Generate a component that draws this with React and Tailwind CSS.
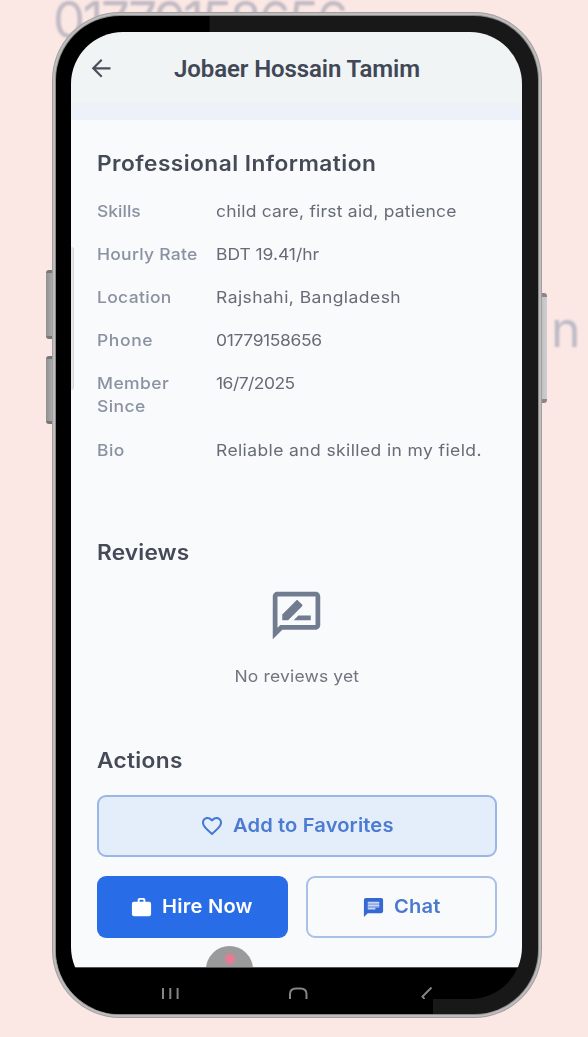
import React from "react";

const rows = [
  { label: "Skills", value: "child care, first aid, patience", h: "h-[42.75px]", lt: "tracking-[0px]", vt: "tracking-[0.2px]" },
  { label: "Hourly Rate", value: "BDT 19.41/hr", h: "h-[42.75px]", lt: "tracking-[0.25px]", vt: "tracking-[-0.05px]" },
  { label: "Location", value: "Rajshahi, Bangladesh", h: "h-[43px]", lt: "tracking-[0.3px]", vt: "tracking-[0.43px]" },
  { label: "Phone", value: "01779158656", h: "h-[43px]", lt: "tracking-[0.6px]", vt: "tracking-[-0.35px]" },
  { label: "Member Since", value: "16/7/2025", h: "h-[67px]", lt: "tracking-[0.4px]", vt: "tracking-[-0.5px]" },
  { label: "Bio", value: "Reliable and skilled in my field.", h: "h-[42.75px]", lt: "tracking-[0.4px]", vt: "tracking-[0.37px]" },
];

function BackArrow() {
  return (
    <svg className="h-[20px] w-[20px]" viewBox="0 0 20 20" fill="none" stroke="#4a505c" strokeWidth="2.2">
      <path d="M19.500 10.300H2.500M10.700 1.800L2.300 10.300l8.400 8.400" />
    </svg>
  );
}

function ReviewIcon() {
  return (
    <svg className="mr-[2px] h-[57px] w-[57px]" viewBox="0 0 24 24" fill="#727c91">
      <path d="M20 2H4c-1.1 0-1.99.9-1.99 2L2 22l4-4h14c1.1 0 2-.9 2-2V4c0-1.1-.9-2-2-2zm0 14H5.17L4 17.17V4h16v12z" />
      <path d="M10.800 14H18v-2h-5.200zM14.360 8.130c.2-.2.2-.51 0-.71l-1.770-1.770c-.2-.2-.51-.2-.71 0L6 11.530V14h2.470z" />
    </svg>
  );
}

function HeartIcon() {
  return (
    <svg className="h-[24px] w-[24px]" viewBox="0 0 24 24" fill="#4478d4">
      <path d="M16.5 3c-1.74 0-3.41.81-4.5 2.09C10.91 3.81 9.24 3 7.5 3 4.42 3 2 5.42 2 8.5c0 3.78 3.4 6.86 8.55 11.54L12 21.35l1.45-1.32C18.6 15.36 22 12.28 22 8.5 22 5.42 19.58 3 16.5 3zm-4.4 15.55l-.1.1-.1-.1C7.14 14.24 4 11.39 4 8.5 4 6.5 5.5 5 7.5 5c1.54 0 3.04.99 3.57 2.36h1.87C13.46 5.99 14.96 5 16.5 5c2 0 3.5 1.5 3.5 3.5 0 2.89-3.14 5.74-7.9 10.05z" />
    </svg>
  );
}

function WorkIcon() {
  return (
    <svg className="h-[23px] w-[23px]" viewBox="0 0 24 24" fill="#ffffff">
      <path d="M20 6h-4V4c0-1.11-.89-2-2-2h-4c-1.11 0-2 .89-2 2v2H4c-1.11 0-1.99.89-1.99 2L2 19c0 1.11.89 2 2 2h16c1.11 0 2-.89 2-2V8c0-1.11-.89-2-2-2zm-6 0h-4V4h4v2z" />
    </svg>
  );
}

function ChatIcon() {
  return (
    <svg className="h-[23px] w-[23px]" viewBox="0 0 24 24">
      <path fill="#3568d2" d="M20 2H4c-1.1 0-1.99.9-1.99 2L2 22l4-4h14c1.1 0 2-.9 2-2V4c0-1.1-.9-2-2-2z" />
      <path fill="#c6d5f3" d="M6 6h12v2H6zM6 9h12v2H6zM6 12h8v2H6z" />
      <path fill="#a6bceb" d="M6 8h12v1H6zM6 11h12v1H6z" />
    </svg>
  );
}

function NavBar() {
  return (
    <div className="flex h-[32px] shrink-0 border-t border-[#555] bg-black">
      <svg className="h-[31px] w-full" viewBox="71 968 451 31" fill="none" stroke="#858585" strokeWidth="2">
        <path d="M163 988v11M170.3 988v11M177.6 988v11" />
        <path d="M290 999v-5q0-5.500 6-5.500h4.500q6 0 6 5.500v5" />
        <path d="M431.500 987.500l-9 9 2 2.500" />
      </svg>
    </div>
  );
}

export default function App() {
  return (
    <div className="relative h-[1037px] w-[588px] overflow-hidden bg-[#fbe8e5] px-[52px] pt-[12px] font-['Inter','Noto_Sans',sans-serif]">
      <div className="absolute left-[53px] top-[-10px] text-[51px] leading-[60px] tracking-[-2.5px] whitespace-nowrap text-[#c2bac3] blur-[1px]">
        01779158656
      </div>
      <div className="absolute left-[551px] top-[299px] text-[50px] leading-[60px] text-[#bdbac6] blur-[1px]">n</div>

      <div className="absolute left-[46px] top-[270px] h-[69px] w-[8px] rounded-l-[3px] border-y-3 border-[#777] bg-linear-to-r from-[#8f8f8f] to-[#b5b5b5]" />
      <div className="absolute left-[46px] top-[356px] h-[68px] w-[8px] rounded-l-[3px] border-y-3 border-[#777] bg-linear-to-r from-[#8f8f8f] to-[#b5b5b5]" />
      <div className="absolute left-[540px] top-[293px] h-[110px] w-[7px] rounded-r-[3px] border-y-4 border-[#8b8788] bg-linear-to-r from-[#bcbcbe] to-[#cfcdd0]" />

      <div className="relative h-[1006px] w-[490px] rounded-[68px] bg-[#a09e9e] p-px">
        <div className="h-full w-full rounded-[67px] bg-[#bebcbc] p-[2px]">
          <div className="h-full w-full rounded-[65px] bg-[#8b8989] p-px">
            <div className="relative h-full w-full overflow-hidden rounded-[64px] bg-linear-to-r from-black from-[31.500%] to-[#181818] to-[32%] pl-[15px] pt-[16px]">
              <div className="absolute bottom-0 left-0 h-[64px] w-[377px] bg-black" />
              <div className="relative flex h-[967px] w-[451px] flex-col overflow-hidden rounded-[52px]">
                <header className="flex h-[71px] shrink-0 items-center bg-[#f0f4f5] pl-[20px]">
                  <BackArrow />
                  <h1 className="ml-[63px] pt-[2px] font-['Roboto',sans-serif] text-[24px] leading-[32px] font-semibold tracking-[-0.1px] text-[#414755]">
                    Jobaer Hossain Tamim
                  </h1>
                </header>
                <div className="h-[17px] shrink-0 bg-linear-to-b from-[#eef2f7] to-[#ecf2fc]" />

                <main className="relative flex flex-1 flex-col bg-[#f8fafc] pl-[26px] pr-[25px]">
                  <div className="absolute left-0 top-[127px] h-[143px] w-[3px] rounded-r-[3px] border-r border-[#d3d5d9] bg-[#e6e8eb]" />
                  <h2 className="mt-[28px] h-[32px] origin-left scale-x-108 text-[21px] leading-[32px] font-semibold tracking-[0.42px] text-[#454a57]">
                    Professional Information
                  </h2>
                  <dl className="mt-[20px] flex h-[290px] flex-col text-[16.5px] leading-[23.5px]">
                    {rows.map((row) => (
                      <div key={row.label} className={`flex shrink-0 ${row.h}`}>
                        <dt className={`w-[119px] shrink-0 origin-left scale-x-106 pr-[10px] font-medium text-[#8a91a1] ${row.lt}`}>{row.label}</dt>
                        <dd className={`origin-left scale-x-106 whitespace-nowrap text-[#666b76] ${row.vt}`}>{row.value}</dd>
                      </div>
                    ))}
                  </dl>

                  <h2 className="mt-[47px] h-[32px] origin-left scale-x-108 text-[21px] leading-[32px] font-semibold tracking-[0.15px] text-[#454a57]">Reviews</h2>
                  <div className="mt-[18px] flex flex-col items-center">
                    <ReviewIcon />
                    <p className="mt-[20px] scale-x-106 text-[16.5px] leading-[24px] tracking-[0.15px] text-[#70757f]">No reviews yet</p>
                  </div>

                  <h2 className="mt-[57px] h-[32px] origin-left scale-x-108 text-[21px] leading-[32px] font-semibold tracking-[0.3px] text-[#454a57]">Actions</h2>
                  <button className="mt-[18px] flex h-[62px] shrink-0 items-center justify-center gap-[9px] rounded-[9px] border-2 border-[#9ab6e6] bg-[#e4eefb] text-[19px] font-semibold tracking-[0.12px] text-[#4b7bd2]">
                    <HeartIcon />
                    <span className="mr-[9px] origin-left scale-x-106">Add to Favorites</span>
                  </button>
                  <div className="mt-[19px] flex justify-between">
                    <button className="flex h-[62px] w-[191px] items-center justify-center gap-[9px] rounded-[9px] bg-[#286de7] text-[19px] font-semibold tracking-[0.2px] text-white">
                      <WorkIcon />
                      <span className="mr-[7px] origin-left scale-x-106">Hire Now</span>
                    </button>
                    <button className="flex h-[62px] w-[191px] items-center justify-center gap-[9px] rounded-[9px] border-2 border-[#a9c0e8] text-[19px] font-semibold tracking-[0.2px] text-[#4b79d0]">
                      <ChatIcon />
                      <span className="mr-[3px] origin-left scale-x-106">Chat</span>
                    </button>
                  </div>
                  <div className="absolute bottom-0 left-[135px] h-[21px] w-[47px] overflow-hidden">
                    <div className="flex h-[47px] w-[47px] justify-center rounded-full bg-[#9b9b9b] pt-[8px]">
                      <div className="h-[10px] w-[10px] rounded-full bg-[#ed7893] blur-[1px]" />
                    </div>
                  </div>
                </main>
                <NavBar />
              </div>
            </div>
          </div>
        </div>
      </div>
    </div>
  );
}
